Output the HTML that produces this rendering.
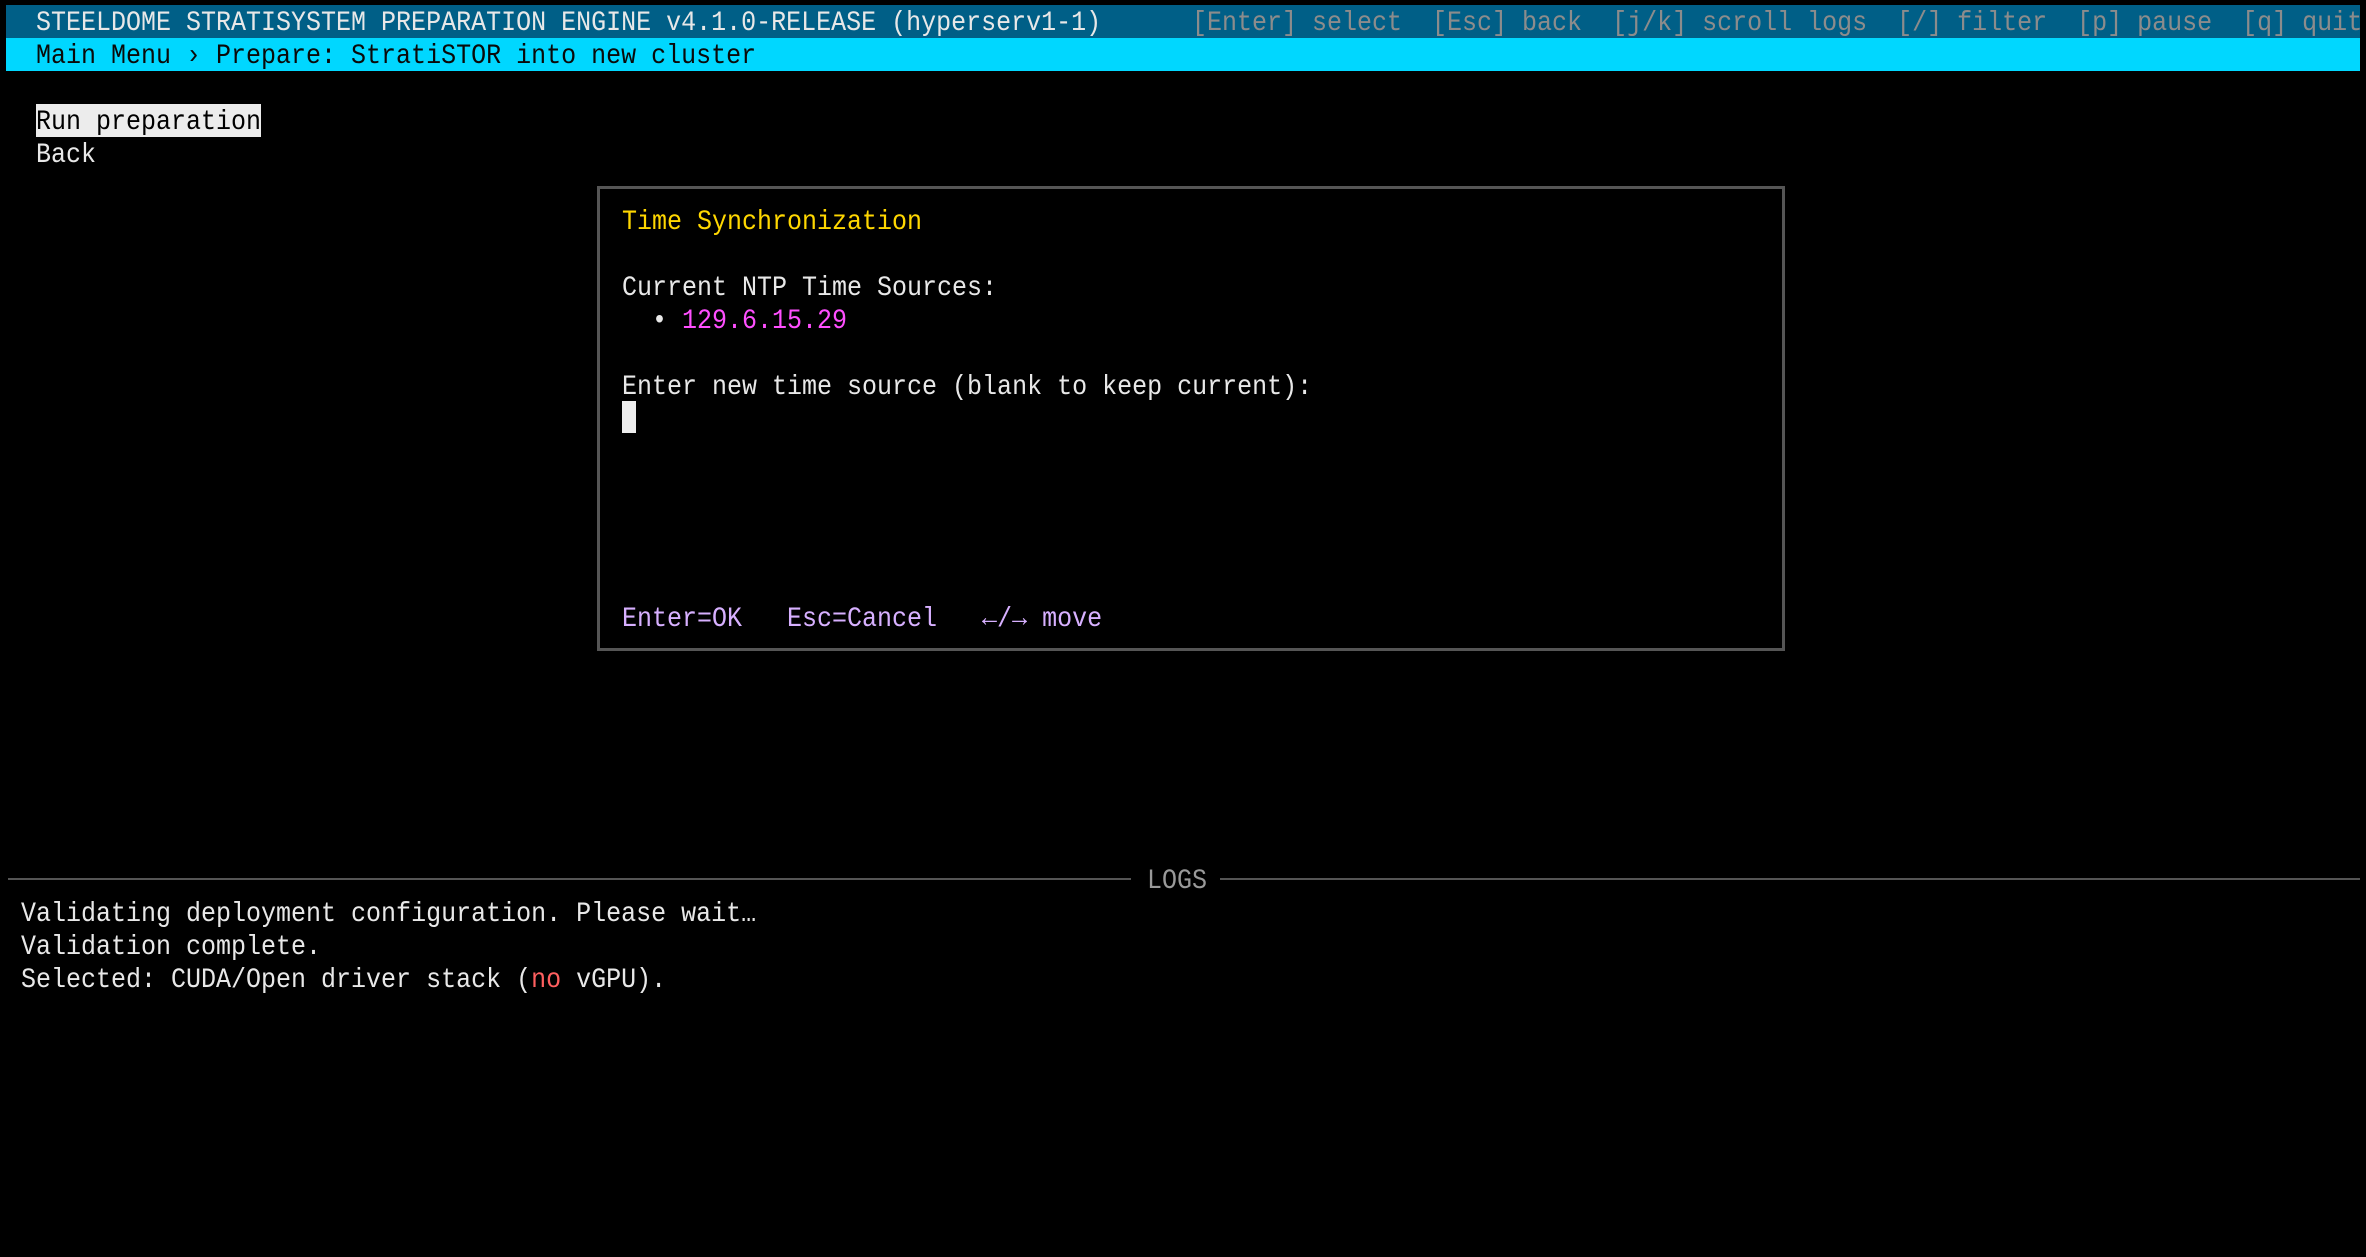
<!DOCTYPE html>
<html><head><meta charset="utf-8">
<style>
html,body{margin:0;padding:0;background:#000;}
body{width:2366px;height:1257px;position:relative;overflow:hidden;font-family:"Liberation Mono","DejaVu Sans Mono",monospace;font-size:25px;color:#e8e8e8;}
.t{position:absolute;white-space:pre;line-height:33px;height:33px;transform:translateY(1px) scaleY(1.12);transform-origin:50% 50%;}
</style></head><body>
<div style="position:absolute;left:6px;top:5px;width:2354px;height:33px;background:#005f87"></div>
<div style="position:absolute;left:6px;top:38px;width:2354px;height:33px;background:#00d7ff"></div>
<div class="t" style="left:36px;top:5px;color:#e8e8e8">STEELDOME STRATISYSTEM PREPARATION ENGINE v4.1.0-RELEASE (hyperserv1-1)</div>
<div style="position:absolute;left:1180px;top:5px;width:1180px;height:33px;overflow:hidden"><div class="t" style="left:12px;top:0;color:#8c8c8c">[Enter] select  [Esc] back  [j/k] scroll logs  [/] filter  [p] pause  [q] quit</div></div>
<div class="t" style="left:36px;top:38px;color:#0a0a0a">Main Menu › Prepare: StratiSTOR into new cluster</div>

<div style="position:absolute;left:36px;top:104px;width:225px;height:33px;background:#ececec"></div>
<div class="t" style="left:36px;top:104px;color:#000">Run preparation</div>
<div class="t" style="left:36px;top:137px;">Back</div>

<div style="position:absolute;left:597px;top:186px;width:1182px;height:459px;border:3px solid #555"></div>
<div class="t" style="left:622px;top:204px;color:#ffd700">Time Synchronization</div>
<div class="t" style="left:622px;top:270px;">Current NTP Time Sources:</div>
<div class="t" style="left:622px;top:303px;">  • <span style="color:#ff4fff">129.6.15.29</span></div>
<div class="t" style="left:622px;top:369px;">Enter new time source (blank to keep current):</div>
<div style="position:absolute;left:622px;top:401px;width:14px;height:32px;background:#eee"></div>
<div class="t" style="left:622px;top:601px;color:#d7b0ff">Enter=OK   Esc=Cancel   ←/→ move</div>

<div style="position:absolute;left:8px;top:878px;width:1123px;height:2px;background:#555"></div>
<div class="t" style="left:1147px;top:863px;color:#999">LOGS</div>
<div style="position:absolute;left:1220px;top:878px;width:1140px;height:2px;background:#555"></div>
<div class="t" style="left:21px;top:896px;">Validating deployment configuration. Please wait…</div>
<div class="t" style="left:21px;top:929px;">Validation complete.</div>
<div class="t" style="left:21px;top:962px;">Selected: CUDA/Open driver stack (<span style="color:#ff5f5f">no</span> vGPU).</div>
</body></html>
